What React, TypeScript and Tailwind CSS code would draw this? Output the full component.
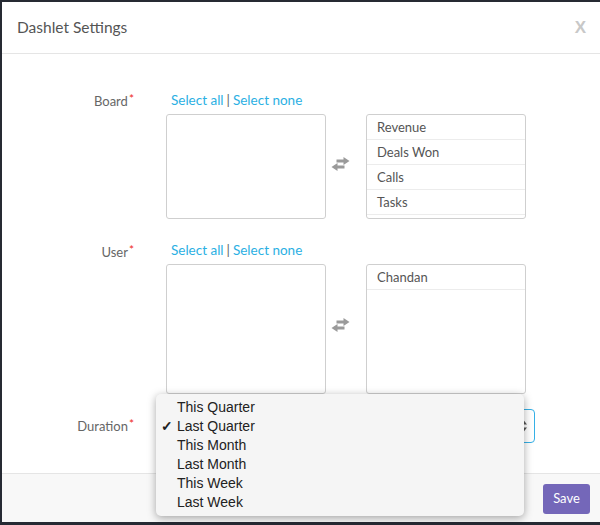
import React from 'react';

const font = { fontFamily: 'Lato, "Open Sans", sans-serif' };

const SwapIcon = () => (
  <svg width="21" height="14" viewBox="0 0 20 14" className="text-[#9a9a9a]">
    <path d="M6 2.5h7V0l6 4-6 4V5.5H6z" fill="currentColor" />
    <path d="M14 8.5H7V6l-6 4 6 4v-2.5h7z" fill="currentColor" />
  </svg>
);

const Links = () => (
  <div className="pl-[5px] text-[13.5px] leading-[18px] text-[#2bb0e3]">
    <span>Select all</span>
    <span className="text-[#666] px-[3px]">|</span>
    <span>Select none</span>
  </div>
);

const Label = ({ text }: { text: string }) => (
  <div className="w-[134px] shrink-0 text-right text-[13px] leading-[18px] text-[#666] pr-[2px]">
    {text}
    <span className="text-[#ee2a24] text-[12px] relative -top-[3px] pl-[1px]">*</span>
  </div>
);

const ListBox = ({ items, h }: { items: string[]; h: string }) => (
  <div className={`w-[160px] ${h} border border-[#cfcfcf] rounded-[3px] bg-white overflow-hidden`}>
    {items.map((it) => (
      <div key={it} className="h-[25px] border-b border-[#ececec] pl-[10px] text-[13px] leading-[24px] text-[#555]">
        {it}
      </div>
    ))}
  </div>
);

const options = ['This Quarter', 'Last Quarter', 'This Month', 'Last Month', 'This Week', 'Last Week'];

export default function App() {
  return (
    <div className="w-[600px] h-[525px] bg-[#262a33] pt-[2px] pl-[2px] pb-[3px]" style={font}>
      <div className="relative h-full bg-white flex flex-col">
        <div className="h-[52px] shrink-0 border-b border-[#e5e5e5] flex items-center justify-between pl-[15px] pr-[14px]">
          <span className="text-[15.5px] text-[#555]">Dashlet Settings</span>
          <span className="text-[17px] font-bold text-[#c8c8c8]" style={{ fontFamily: '"Liberation Sans", sans-serif' }}>X</span>
        </div>

        <div className="flex-1 pt-[37px]">
          <div className="flex gap-[30px]">
            <div className="pt-[1px]"><Label text="Board" /></div>
            <div>
              <Links />
              <div className="flex items-center mt-[5px]">
                <ListBox items={[]} h="h-[105px]" />
                <div className="w-[40px] flex justify-start pl-[4px] mb-[6px]"><SwapIcon /></div>
                <ListBox items={['Revenue', 'Deals Won', 'Calls', 'Tasks']} h="h-[105px]" />
              </div>
            </div>
          </div>

          <div className="flex gap-[30px] mt-[22px]">
            <div className="pt-[2px]"><Label text="User" /></div>
            <div>
              <Links />
              <div className="flex items-center mt-[5px]">
                <ListBox items={[]} h="h-[130px]" />
                <div className="w-[40px] flex justify-start pl-[4px] mb-[8px]"><SwapIcon /></div>
                <ListBox items={['Chandan']} h="h-[130px]" />
              </div>
            </div>
          </div>

          <div className="flex items-center gap-[30px] mt-[15px]">
            <Label text="Duration" />
            <div className="w-[369px] h-[34px] border border-[#35b0e6] rounded-[4px] flex items-center justify-end px-[7px]">
              <svg width="7" height="12" viewBox="0 0 7 12" className="text-[#555]">
                <path d="M3.5 0L7 4.5H0z M3.5 12L0 7.5h7z" fill="currentColor" />
              </svg>
            </div>
          </div>
        </div>

        <div className="h-[49px] shrink-0 border-t border-[#e5e5e5] bg-[#f8f8f8] flex items-center justify-end pr-[10px] pt-[1px]">
          <button className="w-[47px] h-[30px] rounded-[3px] bg-[#7467b9] text-white text-[13px]">Save</button>
        </div>

        <div
          className="absolute left-[154px] top-[392px] w-[368px] h-[122px] bg-[#f5f5f5] rounded-[5px] shadow-[0_2px_8px_rgba(0,0,0,0.35)] pt-[4px]"
          style={{ fontFamily: '"Liberation Sans", Arial, sans-serif' }}
        >
          {options.map((o) => (
            <div key={o} className="relative h-[19px] leading-[19px] pl-[21px] text-[14px] text-[#222]">
              {o === 'Last Quarter' && <span className="absolute left-[5px] font-bold">✓</span>}
              {o}
            </div>
          ))}
        </div>
      </div>
    </div>
  );
}
